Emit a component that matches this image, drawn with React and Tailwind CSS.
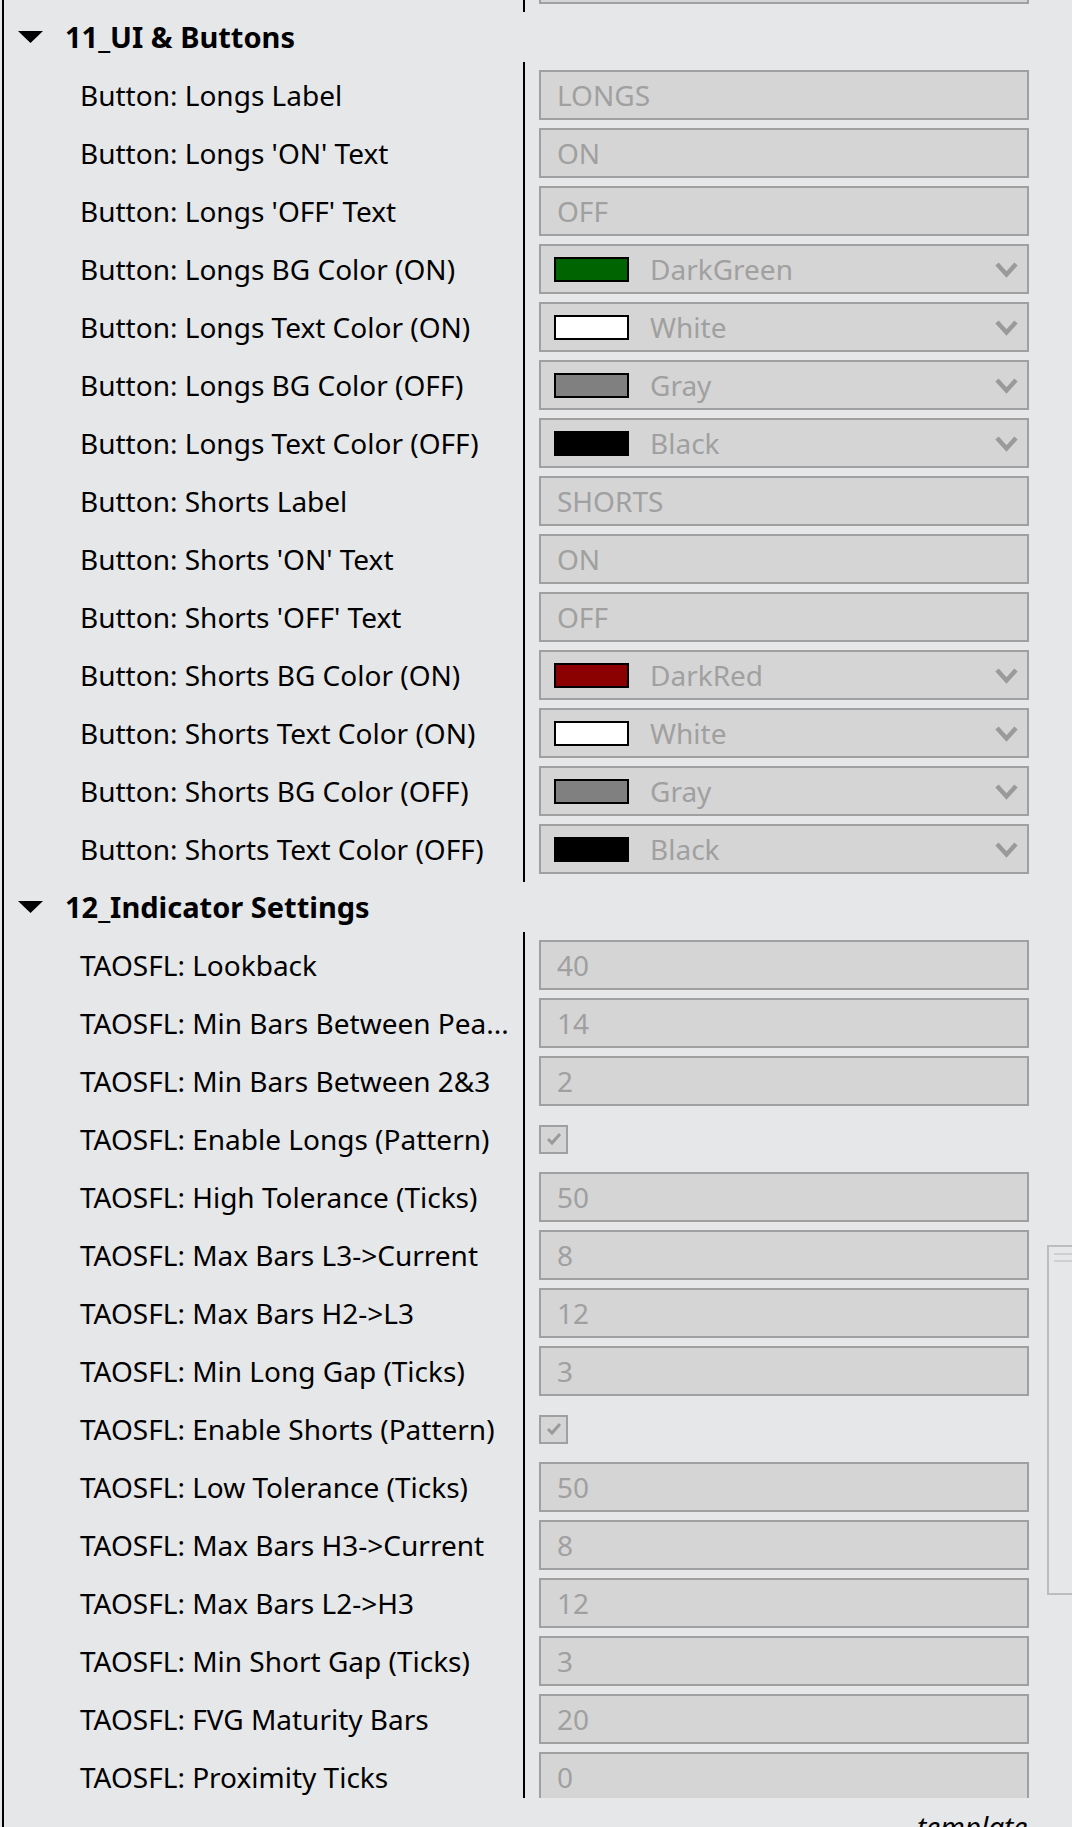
import React from 'react';

const groupUI = [
    { label: 'Button: Longs Label', type: 'text', value: 'LONGS' },
    { label: "Button: Longs 'ON' Text", type: 'text', value: 'ON' },
    { label: "Button: Longs 'OFF' Text", type: 'text', value: 'OFF' },
    { label: 'Button: Longs BG Color (ON)', type: 'color', value: 'DarkGreen', swatch: 'bg-[#006400]' },
    { label: 'Button: Longs Text Color (ON)', type: 'color', value: 'White', swatch: 'bg-white' },
    { label: 'Button: Longs BG Color (OFF)', type: 'color', value: 'Gray', swatch: 'bg-[#808080]' },
    { label: 'Button: Longs Text Color (OFF)', type: 'color', value: 'Black', swatch: 'bg-black' },
    { label: 'Button: Shorts Label', type: 'text', value: 'SHORTS' },
    { label: "Button: Shorts 'ON' Text", type: 'text', value: 'ON' },
    { label: "Button: Shorts 'OFF' Text", type: 'text', value: 'OFF' },
    { label: 'Button: Shorts BG Color (ON)', type: 'color', value: 'DarkRed', swatch: 'bg-[#8b0000]' },
    { label: 'Button: Shorts Text Color (ON)', type: 'color', value: 'White', swatch: 'bg-white' },
    { label: 'Button: Shorts BG Color (OFF)', type: 'color', value: 'Gray', swatch: 'bg-[#808080]' },
    { label: 'Button: Shorts Text Color (OFF)', type: 'color', value: 'Black', swatch: 'bg-black' },
];

const groupIndicator = [
    { label: 'TAOSFL: Lookback', type: 'text', value: '40' },
    { label: 'TAOSFL: Min Bars Between Pea...', type: 'text', value: '14' },
    { label: 'TAOSFL: Min Bars Between 2&3', type: 'text', value: '2' },
    { label: 'TAOSFL: Enable Longs (Pattern)', type: 'check' },
    { label: 'TAOSFL: High Tolerance (Ticks)', type: 'text', value: '50' },
    { label: 'TAOSFL: Max Bars L3->Current', type: 'text', value: '8' },
    { label: 'TAOSFL: Max Bars H2->L3', type: 'text', value: '12' },
    { label: 'TAOSFL: Min Long Gap (Ticks)', type: 'text', value: '3' },
    { label: 'TAOSFL: Enable Shorts (Pattern)', type: 'check' },
    { label: 'TAOSFL: Low Tolerance (Ticks)', type: 'text', value: '50' },
    { label: 'TAOSFL: Max Bars H3->Current', type: 'text', value: '8' },
    { label: 'TAOSFL: Max Bars L2->H3', type: 'text', value: '12' },
    { label: 'TAOSFL: Min Short Gap (Ticks)', type: 'text', value: '3' },
    { label: 'TAOSFL: FVG Maturity Bars', type: 'text', value: '20' },
    { label: 'TAOSFL: Proximity Ticks', type: 'text', value: '0' },
];

const ValueCell = ({ item }) => {
    if (item.type === 'check') {
        return (
            <div className="h-[58px] flex items-center">
                <div className="w-[29px] h-[29px] border-2 border-[#a0a0a0] bg-[#d5d5d5] flex items-center justify-center">
                    <svg width="16" height="14" viewBox="0 0 16 14">
                        <polyline points="2,7 6,11 14,2" fill="none" stroke="#9a9a9a" strokeWidth="3" />
                    </svg>
                </div>
            </div>
        );
    }
    return (
        <div className="h-[58px] flex items-center">
            <div className="w-[490px] h-[50px] border-2 border-[#a0a0a0] bg-[#d5d5d5] flex items-center text-[#a0a0a0]">
                {item.type === 'color' ? (
                    <>
                        <div className={`ml-[13px] w-[75px] h-[25px] border-2 border-black ${item.swatch}`} />
                        <span className="ml-[21px] flex-1">{item.value}</span>
                        <svg width="23" height="17" viewBox="0 0 23 17" className="mr-[9px]">
                            <polyline points="2,3 11.5,13.5 21,3" fill="none" stroke="#9a9a9a" strokeWidth="4.5" />
                        </svg>
                    </>
                ) : (
                    <span className="ml-[16px]">{item.value}</span>
                )}
            </div>
        </div>
    );
};

const Group = ({ title, items, hideHeader }) => (
    <div className="flex flex-col shrink-0">
        {!hideHeader && (
            <div className="h-[58px] flex items-center">
                <svg width="25" height="12" viewBox="0 0 25 12" className="ml-[14px]">
                    <polygon points="0,0 25,0 12.5,12" fill="#000" />
                </svg>
                <span className="ml-[22px] font-bold text-black text-[29px]">{title}</span>
            </div>
        )}
        <div className="flex">
            <div className="w-[519px] flex flex-col">
                {items.map((it, i) => (
                    <div key={i} className="h-[58px] flex items-center pl-[76px] pr-[6px] whitespace-nowrap overflow-hidden text-black">
                        {it.label}
                    </div>
                ))}
            </div>
            <div className="w-[2px] bg-black -my-1" />
            <div className="flex flex-col pl-[14px]">
                {items.map((it, i) => (
                    <ValueCell key={i} item={it} />
                ))}
            </div>
        </div>
    </div>
);

export default function App() {
    return (
        <div
            className="w-[1072px] h-[1827px] bg-[#e6e7e9] relative overflow-hidden text-[28px]"
            style={{ fontFamily: '"Noto Sans", "Open Sans", sans-serif' }}
        >
            <div className="ml-[2px] border-l-2 border-black h-full flex flex-col">
                <div className="h-[1798px] shrink-0 overflow-hidden flex flex-col">
                    <div className="-mt-[50px] shrink-0">
                        <Group hideHeader items={[{ label: '', type: 'text', value: '' }]} />
                    </div>
                    <Group title="11_UI & Buttons" items={groupUI} />
                    <Group title="12_Indicator Settings" items={groupIndicator} />
                </div>
                <div className="pl-[913px] pt-[14px] italic text-black text-[28px] leading-none shrink-0">template</div>
            </div>

            <div className="absolute left-[1047px] top-[1245px] w-[40px] h-[350px] border-2 border-[#bdbdbd] bg-[#e6e7e9]">
                <div className="mt-[6px] ml-[5px] h-[2px] bg-[#cfcfcf]" />
                <div className="mt-[5px] ml-[5px] h-[2px] bg-[#cfcfcf]" />
            </div>
        </div>
    );
}
